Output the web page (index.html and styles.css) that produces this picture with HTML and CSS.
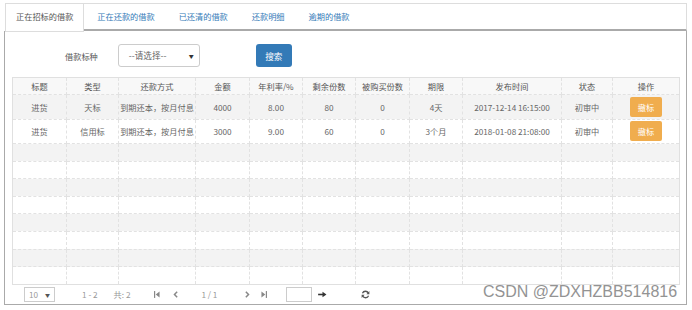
FILE: index.html
```html
<!DOCTYPE html>
<html>
<head>
    <meta charset="UTF-8">
    <title>我的借款</title>
    <link rel="stylesheet" href="styles.css">
</head>
<body>
    <div class="tab-box">
        <ul class="nav-tabs">
            <li class="active">正在招标的借款</li>
            <li>正在还款的借款</li>
            <li>已还清的借款</li>
            <li>还款明细</li>
            <li>逾期的借款</li>
        </ul>
        <div class="tab-panel">
            <div class="filter">
                <span class="filter-label">借款标种</span>
                <div class="select">--请选择--<span class="caret">▼</span></div>
                <button class="btn-search">搜索</button>
            </div>

            <table class="grid">
                <colgroup>
                    <col style="width:54px"><col style="width:52px"><col style="width:77px">
                    <col style="width:54px"><col style="width:53px"><col style="width:53px">
                    <col style="width:54px"><col style="width:53px"><col style="width:99px">
                    <col style="width:51px"><col style="width:67px">
                </colgroup>
                <thead>
                    <tr>
                        <th>标题</th><th>类型</th><th>还款方式</th><th>金额</th><th>年利率/%</th>
                        <th>剩余份数</th><th>被购买份数</th><th>期限</th><th>发布时间</th><th>状态</th><th>操作</th>
                    </tr>
                </thead>
                <tbody>
                    <tr class="data">
                        <td>进货</td><td>天标</td><td>到期还本，按月付息</td><td>4000</td><td>8.00</td>
                        <td>80</td><td>0</td><td>4天</td><td>2017-12-14 16:15:00</td><td>初审中</td>
                        <td><button class="btn-cancel">撤标</button></td>
                    </tr>
                    <tr class="data">
                        <td>进货</td><td>信用标</td><td>到期还本，按月付息</td><td>3000</td><td>9.00</td>
                        <td>60</td><td>0</td><td>3个月</td><td>2018-01-08 21:08:00</td><td>初审中</td>
                        <td><button class="btn-cancel">撤标</button></td>
                    </tr>
                    <tr class="empty"><td></td><td></td><td></td><td></td><td></td><td></td><td></td><td></td><td></td><td></td><td></td></tr>
                    <tr class="empty"><td></td><td></td><td></td><td></td><td></td><td></td><td></td><td></td><td></td><td></td><td></td></tr>
                    <tr class="empty"><td></td><td></td><td></td><td></td><td></td><td></td><td></td><td></td><td></td><td></td><td></td></tr>
                    <tr class="empty"><td></td><td></td><td></td><td></td><td></td><td></td><td></td><td></td><td></td><td></td><td></td></tr>
                    <tr class="empty"><td></td><td></td><td></td><td></td><td></td><td></td><td></td><td></td><td></td><td></td><td></td></tr>
                    <tr class="empty"><td></td><td></td><td></td><td></td><td></td><td></td><td></td><td></td><td></td><td></td><td></td></tr>
                    <tr class="empty"><td></td><td></td><td></td><td></td><td></td><td></td><td></td><td></td><td></td><td></td><td></td></tr>
                    <tr class="empty"><td></td><td></td><td></td><td></td><td></td><td></td><td></td><td></td><td></td><td></td><td></td></tr>
                </tbody>
            </table>

            <div class="pager">
                <div class="page-size">10<span class="caret">▼</span></div>
                <span class="range">1 - 2</span>
                <span class="total">共: 2</span>
                <svg class="pg-first" width="6" height="7" viewBox="0 0 7 8"><rect x="0" y="0" width="1.4" height="8" fill="#888"/><path d="M6.5 0.5 L2 4 L6.5 7.5 Z" fill="#888"/></svg>
                <svg class="pg-prev" width="5" height="7" viewBox="0 0 6 8"><path d="M5 0.8 L1.8 4 L5 7.2" stroke="#888" stroke-width="1.8" fill="none"/></svg>
                <span class="pages">1 / 1</span>
                <svg class="pg-next" width="5" height="7" viewBox="0 0 6 8"><path d="M1 0.8 L4.2 4 L1 7.2" stroke="#888" stroke-width="1.8" fill="none"/></svg>
                <svg class="pg-last" width="6" height="7" viewBox="0 0 7 8"><path d="M0.5 0.5 L5 4 L0.5 7.5 Z" fill="#888"/><rect x="5.6" y="0" width="1.4" height="8" fill="#888"/></svg>
                <div class="goto"></div>
                <svg class="pg-go" width="9" height="7" viewBox="0 0 10 8"><path d="M0 4 H6" stroke="#333" stroke-width="1.8"/><path d="M5 0.8 L9.5 4 L5 7.2 Z" fill="#333"/></svg>
                <svg class="pg-refresh" width="9" height="9" viewBox="0 0 10 10"><path d="M8.2 3.5 A3.6 3.6 0 0 0 1.6 3.6" stroke="#555" stroke-width="1.4" fill="none"/><path d="M9.3 1.2 L9.3 4.6 L6 4.6 Z" fill="#555"/><path d="M1.8 6.5 A3.6 3.6 0 0 0 8.4 6.4" stroke="#555" stroke-width="1.4" fill="none"/><path d="M0.7 8.8 L0.7 5.4 L4 5.4 Z" fill="#555"/></svg>
            </div>
        </div>
    </div>

    <div class="watermark">CSDN @ZDXHZBB514816</div>
</body>
</html>
```

FILE: styles.css
```css
body {
    margin: 0;
    padding: 3px 5px 0 4px;
    font-family: "Noto Sans CJK SC", "Liberation Sans", sans-serif;
    font-size: 8.2px;
    color: #666;
    background-color: #fff;
    position: relative;
}
.nav-tabs {
    list-style: none;
    margin: 0 0 0 1px;
    padding: 0;
    display: flex;
    border-top: 1px solid #ddd;
    border-right: 1px solid #ddd;
    border-bottom: 2px solid #aaa;
    height: 25px;
}
.nav-tabs li {
    height: 25px;
    line-height: 25px;
    padding: 0 10px;
    margin-right: 2px;
    border: 1px solid transparent;
    border-top: none;
    color: #337ab7;
}
.nav-tabs li.active {
    color: #555;
    background-color: #fff;
    border-color: #ddd;
    height: 27px;
}
.tab-panel {
    border: 1px solid #aaa;
    border-top: none;
    padding: 13px 6px 0 7px;
}
.filter {
    display: flex;
    align-items: center;
    height: 23px;
    margin-bottom: 10px;
}
.filter-label {
    margin-left: 53px;
    margin-right: 20px;
    color: #555;
}
.select {
    box-sizing: border-box;
    width: 82px;
    height: 23px;
    border: 1px solid #ccc;
    border-radius: 3px;
    padding-left: 10px;
    line-height: 21px;
    font-size: 8.6px;
    color: #666;
    position: relative;
}
.select .caret {
    position: absolute;
    right: 5px;
    top: 0;
    font-size: 5px;
    color: #333;
}
.btn-search {
    margin-left: 56px;
    width: 36px;
    height: 23px;
    border: none;
    border-radius: 3px;
    background-color: #337ab7;
    color: white;
    font-family: inherit;
    font-size: 8.6px;
    padding: 0;
}
.grid {
    width: 667px;
    table-layout: fixed;
    border-collapse: collapse;
    border: 1px solid #e0e0e0;
}
.grid th {
    height: 16px;
    font-weight: normal;
    color: #555;
    background-color: #f8f8f8;
    border: 1px dashed #e2e2e2;
    padding: 0;
    text-align: center;
}
.grid td {
    border: 1px dashed #e2e2e2;
    padding: 0;
    text-align: center;
    white-space: nowrap;
}
.grid tr.data td {
    height: 23.5px;
}
.grid tr.empty td {
    height: 16.6px;
}
.grid tbody tr:nth-child(odd) {
    background-color: #f3f3f3;
}
.btn-cancel {
    width: 32px;
    height: 20px;
    border: none;
    border-radius: 2px;
    background-color: #f0ad4e;
    color: white;
    font-family: inherit;
    font-size: 8.2px;
    padding: 0;
    vertical-align: middle;
}
.pager {
    display: flex;
    align-items: center;
    height: 19px;
    color: #999;
}
.page-size {
    box-sizing: border-box;
    margin-left: 12px;
    width: 31px;
    height: 15px;
    border: 1px solid #ccc;
    padding-left: 4px;
    line-height: 13px;
    position: relative;
}
.page-size .caret {
    position: absolute;
    right: 4px;
    font-size: 5px;
    color: #555;
}
.range {
    margin-left: 27px;
}
.total {
    margin-left: 16px;
}
.pg-first {
    margin-left: 24px;
}
.pg-prev {
    margin-left: 13px;
}
.pages {
    margin-left: 23px;
}
.pg-next {
    margin-left: 28px;
}
.pg-last {
    margin-left: 11px;
}
.goto {
    box-sizing: border-box;
    margin-left: 19px;
    width: 26px;
    height: 15px;
    border: 1px solid #ccc;
}
.pg-go {
    margin-left: 6px;
}
.pg-refresh {
    margin-left: 34px;
}
.watermark {
    position: absolute;
    left: 483px;
    top: 283px;
    font-family: "Liberation Sans", Arial, sans-serif;
    font-size: 16px;
    color: #939393;
}
```
